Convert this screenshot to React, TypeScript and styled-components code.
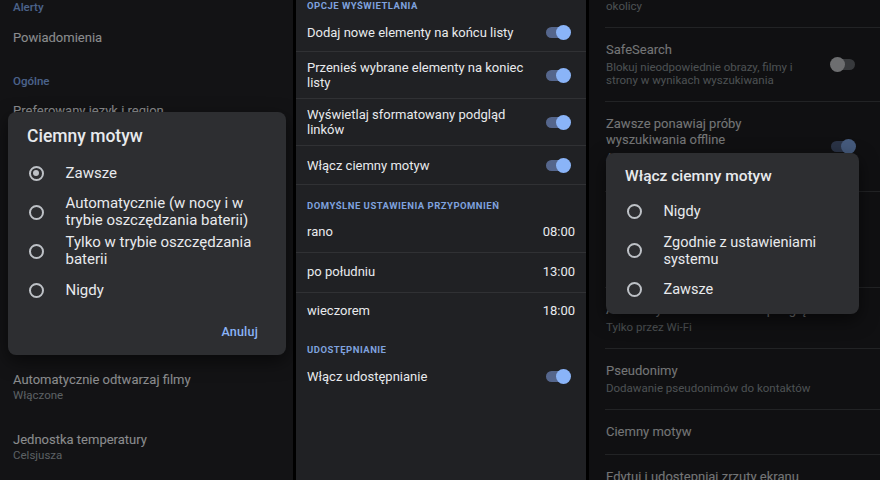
import React from "react";
import styled, { createGlobalStyle } from "styled-components";

const GlobalStyle = createGlobalStyle`
  html, body { margin: 0; padding: 0; background: #000; }
  body { font-family: Roboto, "Noto Sans", "Liberation Sans", sans-serif; -webkit-font-smoothing: antialiased; }
  * { box-sizing: border-box; }
`;

const Screen = styled.div`
  display: flex;
  gap: 3px;
  width: 880px;
  height: 480px;
  overflow: hidden;
  background: #000;
`;

const Panel = styled.section<{ $w?: number }>`
  position: relative;
  overflow: hidden;
  background: #202124;
  color: #e8eaed;
  ${(p) => (p.$w ? `width: ${p.$w}px; flex: none;` : `flex: 1;`)}
`;

const Scrim = styled.div<{ $a: number }>`
  position: absolute;
  inset: 0;
  z-index: 1;
  background: rgba(0, 0, 0, ${(p) => p.$a});
`;

const Dialog = styled.div<{ $left: number; $top: number; $w: number; $h: number; $fs: number; $pt: number }>`
  position: absolute;
  z-index: 2;
  left: ${(p) => p.$left}px;
  top: ${(p) => p.$top}px;
  width: ${(p) => p.$w}px;
  height: ${(p) => p.$h}px;
  display: flex;
  flex-direction: column;
  padding: ${(p) => p.$pt}px 19px 0 19px;
  background: #2d2e31;
  border-radius: 8px;
  box-shadow: 0 6px 18px rgba(0, 0, 0, 0.55);
  overflow: hidden;
  font-size: ${(p) => p.$fs}px;
`;

const DialogTitle = styled.h2<{ $size: number; $gap: number }>`
  margin: 0 0 ${(p) => p.$gap}px 0;
  font-size: ${(p) => p.$size}px;
  line-height: 22px;
  font-weight: 500;
  color: #e8eaed;
`;

const Option = styled.div`
  display: flex;
  align-items: center;
  gap: 22px;
  min-height: 39px;
  padding: 2px 0 2px 1.5px;
  font-size: inherit;
  line-height: 17px;
  color: #e8eaed;
`;

const Radio = styled.span<{ $checked?: boolean }>`
  position: relative;
  flex: none;
  width: 15px;
  height: 15px;
  border-radius: 50%;
  border: 2px solid #bdc1c6;
  &::after {
    content: "";
    display: ${(p) => (p.$checked ? "block" : "none")};
    position: absolute;
    left: 2.5px;
    top: 2.5px;
    width: 6px;
    height: 6px;
    border-radius: 50%;
    background: #bdc1c6;
  }
`;

const Actions = styled.div`
  display: flex;
  justify-content: flex-end;
  margin-top: 13px;
  padding-right: 9px;
`;

const TextButton = styled.span`
  font-size: 12.5px;
  font-weight: 500;
  letter-spacing: 0.2px;
  line-height: 18px;
  color: #8ab4f8;
`;

const Switch = styled.span<{ $on?: boolean }>`
  position: relative;
  flex: none;
  width: 26px;
  height: 15px;
  &::before {
    content: "";
    position: absolute;
    left: 1px;
    right: 1px;
    top: 2px;
    height: 11px;
    border-radius: 6px;
    background: ${(p) => (p.$on ? "#55668c" : "#6f7378")};
  }
  &::after {
    content: "";
    position: absolute;
    top: 0;
    left: ${(p) => (p.$on ? "11px" : "0")};
    width: 15px;
    height: 15px;
    border-radius: 50%;
    background: ${(p) => (p.$on ? "#8ab4f8" : "#dadce0")};
  }
`;

/* ---------- left panel ---------- */

const LList = styled.div`
  display: flex;
  flex-direction: column;
  margin-top: -15px;
`;

const LHeader = styled.div`
  height: 32px;
  padding: 15px 13px 0;
  font-size: 11.5px;
  line-height: 14px;
  font-weight: 500;
  color: #7fa6e6;
`;

const LSpacer = styled.div`
  height: 29px;
`;

const LRow = styled.div<{ $single?: boolean }>`
  display: flex;
  flex-direction: column;
  justify-content: ${(p) => (p.$single ? "center" : "flex-start")};
  height: ${(p) => (p.$single ? 42 : 60)}px;
  padding: ${(p) => (p.$single ? "0 13px" : "12px 13px 0")};
`;

const LTitle = styled.div`
  font-size: 13px;
  line-height: 16px;
  color: #e8eaed;
  white-space: nowrap;
`;

const LSub = styled.div`
  font-size: 11.5px;
  line-height: 14px;
  color: #9aa0a6;
`;

/* ---------- middle panel ---------- */

const MList = styled.div`
  display: flex;
  flex-direction: column;
  margin-top: -15px;
`;

const MHeader = styled.div`
  height: 28px;
  padding: 15px 11px 0;
  font-size: 9.5px;
  line-height: 12px;
  font-weight: 700;
  letter-spacing: 0.5px;
  color: #7fa2de;
`;

const SwitchRow = styled.div<{ $last?: boolean }>`
  display: flex;
  align-items: center;
  justify-content: space-between;
  gap: 12px;
  min-height: 39px;
  padding: 8px 15px 8px 11px;
  border-bottom: 1px solid ${(p) => (p.$last ? "transparent" : "#303134")};
`;

const MLabel = styled.span`
  max-width: 228px;
  font-size: 13px;
  line-height: 15px;
  color: #e8eaed;
`;

const TimeRow = styled.div<{ $last?: boolean }>`
  display: flex;
  align-items: center;
  justify-content: space-between;
  min-height: ${(p) => (p.$last ? 36 : 40)}px;
  padding: 0 11px 2px;
  font-size: 13px;
  color: #e8eaed;
  border-bottom: ${(p) => (p.$last ? "none" : "1px solid #303134")};
`;

/* ---------- right panel ---------- */

const RList = styled.div`
  display: flex;
  flex-direction: column;
  margin-top: -46px;
`;

const RRow = styled.div<{ $minH?: number }>`
  display: flex;
  align-items: center;
  gap: 16px;
  margin-left: 16px;
  min-height: ${(p) => p.$minH ?? 0}px;
  padding: 14px 24px 14px 1px;
  border-bottom: 1px solid #45474b;
`;

const RText = styled.div`
  flex: 1;
  min-width: 0;
  display: flex;
  flex-direction: column;
  gap: 3px;
`;

const RTitle = styled.div`
  font-size: 13px;
  line-height: 16px;
  color: #e8eaed;
`;

const RSub = styled.div`
  font-size: 11.5px;
  line-height: 13px;
  color: #9aa0a6;
  white-space: pre-line;
`;

type LItem =
  | { kind: "h"; text: string }
  | { kind: "gap" }
  | { kind: "r"; title: string; sub?: string };

const leftItems: LItem[] = [
  { kind: "h", text: "Alerty" },
  { kind: "r", title: "Powiadomienia" },
  { kind: "h", text: "Ogólne" },
  { kind: "r", title: "Preferowany język i region", sub: "Polski (Polska)" },
  { kind: "r", title: "Ciemny motyw", sub: "Zawsze" },
  { kind: "r", title: "Jednostki odległości", sub: "Kilometry" },
  { kind: "r", title: "Rozmiar tekstu", sub: "Domyślny" },
  { kind: "gap" },
  { kind: "r", title: "Automatycznie odtwarzaj filmy", sub: "Włączone" },
  { kind: "r", title: "Jednostka temperatury", sub: "Celsjusza" },
];

const displayOptions = [
  "Dodaj nowe elementy na końcu listy",
  "Przenieś wybrane elementy na koniec listy",
  "Wyświetlaj sformatowany podgląd linków",
  "Włącz ciemny motyw",
];

const reminders = [
  { label: "rano", time: "08:00" },
  { label: "po południu", time: "13:00" },
  { label: "wieczorem", time: "18:00" },
];

type RItem = { title?: string; sub?: string; toggle?: "on" | "off"; minH?: number };

const rightItems: RItem[] = [
  { title: "Wyniki lokalne", sub: "Pokazuj wyniki i informacje z Twojej\nokolicy" },
  { title: "SafeSearch", sub: "Blokuj nieodpowiednie obrazy, filmy i strony w wynikach wyszukiwania", toggle: "off" },
  {
    title: "Zawsze ponawiaj próby wyszukiwania offline",
    sub: "Automatycznie ponawiaj wyszukiwania, gdy urządzenie znowu będzie online",
    toggle: "on",
  },
  { title: "Podgląd wyników", sub: "Pokazuj podgląd stron w wynikach", minH: 96 },
  { title: "Automatyczne odtwarzanie podglądów", sub: "Tylko przez Wi-Fi" },
  { title: "Pseudonimy", sub: "Dodawanie pseudonimów do kontaktów" },
  { title: "Ciemny motyw" },
  { title: "Edytuj i udostępniaj zrzuty ekranu", sub: "Włączone" },
];

export default function App() {
  return (
    <>
      <GlobalStyle />
      <Screen>
        <Panel $w={293}>
          <LList>
            {leftItems.map((it, i) =>
              it.kind === "h" ? (
                <LHeader key={i}>{it.text}</LHeader>
              ) : it.kind === "gap" ? (
                <LSpacer key={i} />
              ) : (
                <LRow key={i} $single={!it.sub}>
                  <LTitle>{it.title}</LTitle>
                  {it.sub && <LSub>{it.sub}</LSub>}
                </LRow>
              )
            )}
          </LList>
          <Scrim $a={0.4} />
          <Dialog $left={8} $top={112} $w={278} $h={243} $fs={15} $pt={13}>
            <DialogTitle $size={17.5} $gap={6.5}>
              Ciemny motyw
            </DialogTitle>
            <Option>
              <Radio $checked />
              <span>Zawsze</span>
            </Option>
            <Option>
              <Radio />
              <span>Automatycznie (w nocy i w trybie oszczędzania baterii)</span>
            </Option>
            <Option>
              <Radio />
              <span>Tylko w trybie oszczędzania baterii</span>
            </Option>
            <Option>
              <Radio />
              <span>Nigdy</span>
            </Option>
            <Actions>
              <TextButton>Anuluj</TextButton>
            </Actions>
          </Dialog>
        </Panel>

        <Panel $w={290}>
          <MList>
            <MHeader>OPCJE WYŚWIETLANIA</MHeader>
            {displayOptions.map((t) => (
              <SwitchRow key={t}>
                <MLabel>{t}</MLabel>
                <Switch $on />
              </SwitchRow>
            ))}
            <MHeader>DOMYŚLNE USTAWIENIA PRZYPOMNIEŃ</MHeader>
            {reminders.map((r, i) => (
              <TimeRow key={r.label} $last={i === reminders.length - 1}>
                <span>{r.label}</span>
                <span>{r.time}</span>
              </TimeRow>
            ))}
            <MHeader>UDOSTĘPNIANIE</MHeader>
            <SwitchRow $last>
              <MLabel>Włącz udostępnianie</MLabel>
              <Switch $on />
            </SwitchRow>
          </MList>
        </Panel>

        <Panel>
          <RList>
            {rightItems.map((r, i) => (
              <RRow key={i} $minH={r.minH}>
                <RText>
                  {r.title && <RTitle>{r.title}</RTitle>}
                  {r.sub && <RSub>{r.sub}</RSub>}
                </RText>
                {r.toggle && <Switch $on={r.toggle === "on"} />}
              </RRow>
            ))}
          </RList>
          <Scrim $a={0.5} />
          <Dialog $left={17} $top={153} $w={253} $h={161} $fs={14.5} $pt={12}>
            <DialogTitle $size={15.5} $gap={5}>
              Włącz ciemny motyw
            </DialogTitle>
            <Option>
              <Radio />
              <span>Nigdy</span>
            </Option>
            <Option>
              <Radio />
              <span>Zgodnie z ustawieniami systemu</span>
            </Option>
            <Option>
              <Radio />
              <span>Zawsze</span>
            </Option>
          </Dialog>
        </Panel>
      </Screen>
    </>
  );
}
